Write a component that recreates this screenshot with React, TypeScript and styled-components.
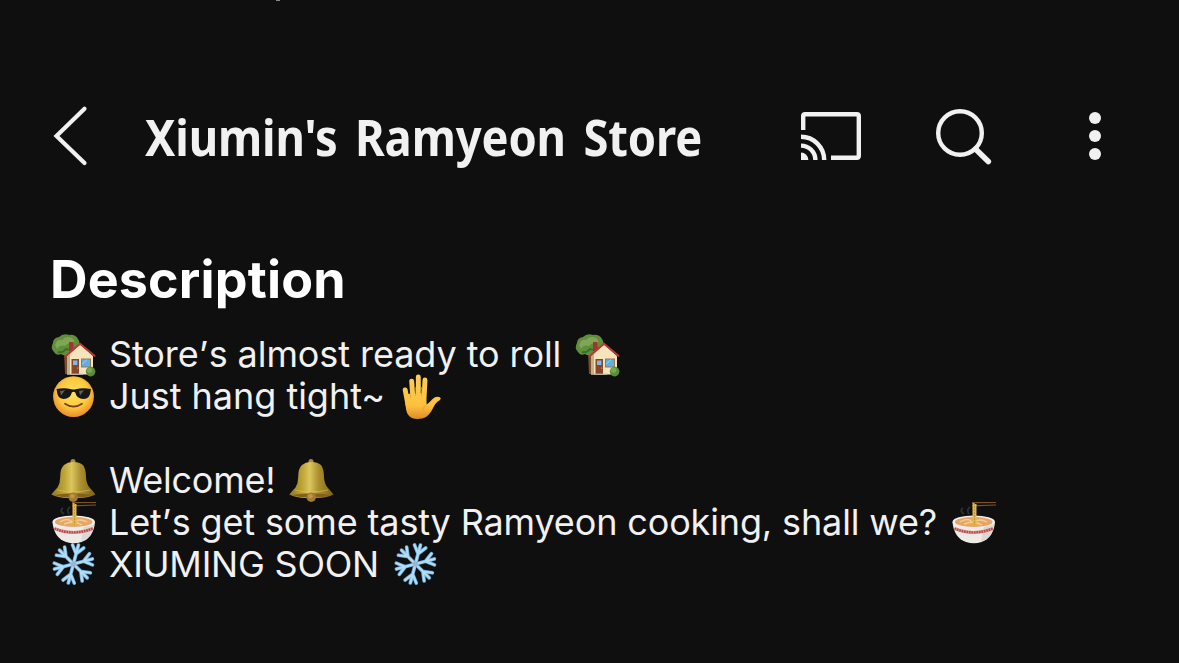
import type { ReactNode } from "react";
import styled, { createGlobalStyle } from "styled-components";

const GlobalStyle = createGlobalStyle`
  body {
    margin: 0;
    background-color: #0f0f0f;
  }
`;

const Screen = styled.div`
  width: 1179px;
  height: 663px;
  overflow: hidden;
  background-color: #0f0f0f;
  color: #f1f1f1;
  font-family: Inter, "Liberation Sans", sans-serif;
`;

const StatusBar = styled.div`
  display: flex;
  height: 100px;
`;

const StatusTick = styled.span`
  width: 4px;
  height: 1px;
  margin-left: 276px;
  background-color: #8a8a8a;
`;

const Header = styled.header`
  display: flex;
  align-items: center;
  height: 72px;
  padding: 0 78px 0 51px;
`;

const IconButton = styled.button`
  display: flex;
  padding: 0;
  border: none;
  background: none;
  color: inherit;

  svg {
    display: block;
  }
`;

const Title = styled.h1`
  flex: 1;
  min-width: 0;
  margin: 0 0 0 54px;
  font-family: "Noto Sans", "Open Sans", sans-serif;
  font-size: 51px;
  font-weight: 700;
  line-height: 73px;
  letter-spacing: -0.15px;
  word-spacing: 6.5px;
  white-space: nowrap;
  transform: scaleX(0.889);
  transform-origin: left;
`;

const Actions = styled.div`
  display: flex;
  align-items: center;
  gap: 74px;

  button:last-child {
    margin-left: 22px;
  }
`;

const Description = styled.section`
  padding: 76px 51px 0;
`;

const Heading = styled.h2`
  margin: 0 0 21px -1px;
  font-size: 52px;
  font-weight: 700;
  line-height: 64px;
  letter-spacing: 0.15px;
  color: #ffffff;
`;

const Line = styled.div`
  display: flex;
  align-items: center;
  height: 42px;
`;

const Text = styled.span<{ $spacing: number }>`
  margin: 0 14px 0 13px;
  font-size: 36px;
  line-height: 44px;
  letter-spacing: ${(props) => props.$spacing}px;
  white-space: nowrap;
`;

const Apostrophe = styled.span`
  letter-spacing: 0.6px;
`;

const EmojiSvg = styled.svg`
  flex: none;
  width: 45px;
  height: 42px;
  overflow: visible;
`;

function BackIcon() {
  return (
    <svg width="40" height="72" viewBox="51 100 40 72" fill="none">
      <path d="M84.5 108.7L56.5 136L84.5 163" stroke="currentColor" strokeWidth="4.2" strokeLinecap="round" />
    </svg>
  );
}

function CastIcon() {
  return (
    <svg width="60" height="48" viewBox="0 0 60 48" fill="none" stroke="currentColor" strokeWidth="4.4">
      <path d="M2.2 18V4.2Q2.2 2.2 4.2 2.2H55.8Q57.8 2.2 57.8 4.2V43.8Q57.8 45.8 55.8 45.8H30" />
      <path d="M0 24.8A23.2 23.2 0 0 1 23.2 48M0 33.6A14.4 14.4 0 0 1 14.4 48" />
      <path d="M0 40.6A7.4 7.4 0 0 1 7.4 48H0Z" fill="currentColor" stroke="none" />
    </svg>
  );
}

function SearchIcon() {
  return (
    <svg width="58" height="58" viewBox="0 0 58 58" fill="none" stroke="currentColor">
      <circle cx="25" cy="26" r="21.8" strokeWidth="4.4" />
      <path d="M40.5 42L53.3 54.5" strokeWidth="5.6" strokeLinecap="round" />
    </svg>
  );
}

function MoreIcon() {
  return (
    <svg width="12" height="48" viewBox="0 0 12 48" fill="currentColor">
      <circle cx="6" cy="6" r="6" />
      <circle cx="6" cy="24" r="6" />
      <circle cx="6" cy="42" r="6" />
    </svg>
  );
}

function House() {
  return (
    <EmojiSvg viewBox="0 0 45 42">
      <path d="M13 19H18V41H14Z" fill="#7a4f2c" />
      <path
        d="M3 19Q-1 15 2 10Q2 5 8 4Q12 0 18 2Q24 1 27 6Q30 10 27 15Q25 20 19 20Q14 24 10 21Q5 23 3 19Z"
        fill="#5f8f3b"
      />
      <path d="M4 12Q6 6 11 7Q15 2 21 5Q25 8 22 11Q17 9 14 13Q9 11 6 16Z" fill="#7ea653" />
      <path d="M7 19Q12 20 15 16Q20 18 22 14" fill="none" stroke="#3f6c2b" strokeWidth="2" />
      <path d="M18 9H22.5V18H18Z" fill="#a83232" />
      <path d="M16 23L29 11.5L42 23V41.5H16Z" fill="#f5e5bd" />
      <path d="M16 23L19 20V41.5H16Z" fill="#c7b088" />
      <path d="M14.5 23.3L29 10.8L43.5 22.8" fill="none" stroke="#b93a35" strokeWidth="1.9" strokeLinecap="round" />
      <rect x="20.5" y="26" width="7.5" height="15" fill="#8b452d" />
      <rect x="22" y="27.5" width="4.4" height="4.5" fill="#79bce4" />
      <circle cx="26.7" cy="35" r="0.6" fill="#e7c46a" />
      <rect x="30.5" y="26" width="9" height="8" fill="#5eaee2" stroke="#9a7654" strokeWidth="1" />
      <path d="M31.2 31L36 26.7" stroke="#9bd4ef" strokeWidth="1" />
      <path d="M19 41.3H32" stroke="#b8b2a6" strokeWidth="1.4" />
      <circle cx="39.6" cy="38.6" r="4.8" fill="#598d37" />
      <circle cx="38.6" cy="37.2" r="2.6" fill="#79a94b" />
    </EmojiSvg>
  );
}

function CoolFace() {
  return (
    <EmojiSvg viewBox="0 0 45 42">
      <defs>
        <radialGradient id="face" cx="50%" cy="42%" r="55%">
          <stop offset="0" stopColor="#ffe35a" />
          <stop offset="0.65" stopColor="#fdc83f" />
          <stop offset="1" stopColor="#ec942d" />
        </radialGradient>
      </defs>
      <circle cx="22.5" cy="21.6" r="20.4" fill="url(#face)" />
      <path
        d="M5.5 14Q13 12.2 20.5 14.2Q22.5 14.8 24.5 14.2Q32 12.2 40 14L39.6 16Q39.2 23.8 32.5 24Q25.5 24 24.3 17.5Q22.5 16 20.8 17.5Q19.5 24 12.5 24Q6.2 23.5 5.9 16Z"
        fill="#171717"
      />
      <path d="M9 16L14 15.2L10 20.5ZM28 16L33 15.2L29 20.5Z" fill="#606060" />
      <path d="M14 28.7Q22.5 34.5 31 28.7" fill="none" stroke="#754015" strokeWidth="1.7" strokeLinecap="round" />
    </EmojiSvg>
  );
}

function Hand() {
  return (
    <EmojiSvg viewBox="0 0 45 42">
      <defs>
        <linearGradient id="skin" gradientUnits="userSpaceOnUse" x1="0" y1="0" x2="0" y2="44">
          <stop offset="0" stopColor="#ffce55" />
          <stop offset="0.7" stopColor="#fdc03e" />
          <stop offset="1" stopColor="#dc8c24" />
        </linearGradient>
      </defs>
      <g fill="none" stroke="url(#skin)" strokeWidth="4.9" strokeLinecap="round">
        <path d="M6.2 15L9 30" />
        <path d="M12.7 6.2L14.2 28" />
        <path d="M19.3 2L19.4 28" />
        <path d="M26 5L24.8 28" />
      </g>
      <path
        d="M6 25L9 19L26.5 18L27.6 29.5Q31 27 33.3 24.2Q37 20.8 41 22.3Q42.5 23.2 41 25C37 27.3 35.5 30 33.5 34C30 41 25.5 44 18.5 44C10.5 44 8 39.5 7 34Z"
        fill="url(#skin)"
      />
      <path d="M10.8 18L11.6 23M16.6 12V21M22.5 12V21M27.5 29.5Q24.5 31 24 35" fill="none" stroke="#dc9a2c" strokeWidth="0.7" />
    </EmojiSvg>
  );
}

function Bell() {
  return (
    <EmojiSvg viewBox="0 0 45 42">
      <defs>
        <linearGradient id="brass">
          <stop offset="0" stopColor="#8f7720" />
          <stop offset="0.3" stopColor="#c0a537" />
          <stop offset="0.46" stopColor="#dcc65e" />
          <stop offset="0.66" stopColor="#ad9030" />
          <stop offset="1" stopColor="#7c6117" />
        </linearGradient>
      </defs>
      <circle cx="22" cy="2.4" r="2.5" fill="#a88b35" />
      <path
        d="M13 6Q17 2.7 22 3Q28 2.7 32 6Q35 10 35 18Q35.2 25 39 29Q41 31 44.5 35.5Q36 40 22.4 38.6Q9 40 0.3 35.5Q4 31 6.5 28.5Q9.3 24 9.2 18Q9.3 9 13 6Z"
        fill="url(#brass)"
      />
      <path d="M6 31Q22 35 39 31" fill="none" stroke="#e0c454" strokeWidth="1" opacity="0.6" />
      <path d="M3 36Q22 32.5 42 36Q32 39 22 38.5Q12 39 3 36Z" fill="#80611c" />
      <circle cx="22.2" cy="38.2" r="4.8" fill="#a37a30" />
      <circle cx="21.4" cy="37.2" r="2.3" fill="#c39150" />
    </EmojiSvg>
  );
}

function Noodles() {
  return (
    <EmojiSvg viewBox="0 0 45 42">
      <path d="M13 13Q8 10 12 7M18 13Q15 9 19 6" fill="none" stroke="#45474b" strokeWidth="1.7" opacity="0.6" />
      <path d="M1.5 21Q3 37 15 41Q23 43.5 30.5 41Q42.5 37 44 21Z" fill="#eeeae7" />
      <path d="M33 25L43.5 23Q41 37 30 41Z" fill="#d2cbc8" opacity="0.6" />
      <ellipse cx="22.7" cy="20.7" rx="21.2" ry="6.2" fill="#f2eeeb" />
      <ellipse cx="22.7" cy="21" rx="18.8" ry="5" fill="#e6a667" />
      <path d="M9 21Q17 16 21 21Q29 17 36 21M13 23Q23 19 31 24" fill="none" stroke="#f8ce8d" strokeWidth="1.4" />
      <path d="M3.5 27.5Q22 35.3 42 27.5" fill="none" stroke="#d99c98" strokeWidth="3" />
      <path d="M3.5 27.5Q22 35.3 42 27.5" fill="none" stroke="#bd4948" strokeWidth="2.4" strokeDasharray="1.6 0.9" />
      <path d="M21 1.7L45 1.5M21 4.8L45 4" stroke="#7e5122" strokeWidth="1.2" />
      <path d="M22.5 2V24M24.5 3V24" stroke="#e1b94b" strokeWidth="2" />
      <path d="M23.5 2V24" stroke="#ad7e25" strokeWidth="0.6" strokeDasharray="2 1" />
    </EmojiSvg>
  );
}

function Snowflake() {
  return (
    <EmojiSvg viewBox="0 0 45 42">
      {[0, 60, 120, 180, 240, 300].map((angle) => (
        <g key={angle} transform={`rotate(${angle + 15} 22.4 21)`} fill="none" strokeLinecap="round">
          <path d="M22.4 21V1.4M16.6 2.8L22.4 10.5L28.2 2.8" stroke="#6aaddd" strokeWidth="3.7" />
          <path d="M22.4 21V1.4M16.6 2.8L22.4 10.5L28.2 2.8" stroke="#b3ddf5" strokeWidth="2.1" />
        </g>
      ))}
      <circle cx="22.4" cy="21" r="2.8" fill="#a3b3ca" />
    </EmojiSvg>
  );
}

type MessageProps = {
  start: ReactNode;
  end: ReactNode;
  spacing: number;
  children: ReactNode;
};

function Message({ start, end, spacing, children }: MessageProps) {
  return (
    <Line>
      {start}
      <Text $spacing={spacing}>{children}</Text>
      {end}
    </Line>
  );
}

function App() {
  return (
    <>
      <GlobalStyle />
      <Screen>
        <StatusBar>
          <StatusTick />
        </StatusBar>
        <Header>
          <IconButton aria-label="Back">
            <BackIcon />
          </IconButton>
          <Title>Xiumin's Ramyeon Store</Title>
          <Actions>
            <IconButton aria-label="Cast">
              <CastIcon />
            </IconButton>
            <IconButton aria-label="Search">
              <SearchIcon />
            </IconButton>
            <IconButton aria-label="More options">
              <MoreIcon />
            </IconButton>
          </Actions>
        </Header>
        <Description>
          <Heading>Description</Heading>
          <Message start={<House />} end={<House />} spacing={-0.08}>
            Store<Apostrophe>’</Apostrophe>s almost ready to roll
          </Message>
          <Message start={<CoolFace />} end={<Hand />} spacing={-0.03}>
            Just hang tight~
          </Message>
          <Line />
          <Message start={<Bell />} end={<Bell />} spacing={-0.27}>
            Welcome!
          </Message>
          <Message start={<Noodles />} end={<Noodles />} spacing={-0.14}>
            Let<Apostrophe>’</Apostrophe>s get some tasty Ramyeon cooking, shall we?
          </Message>
          <Message start={<Snowflake />} end={<Snowflake />} spacing={-0.22}>
            XIUMING SOON
          </Message>
        </Description>
      </Screen>
    </>
  );
}

export default App;
